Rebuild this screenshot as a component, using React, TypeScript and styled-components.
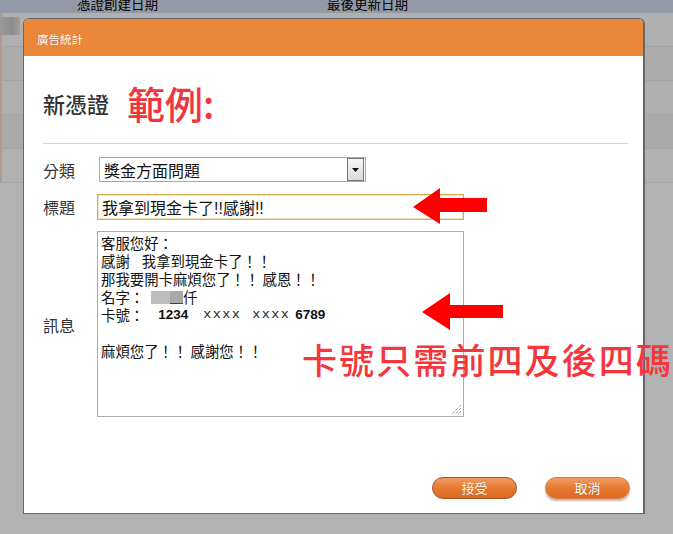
import * as React from "react";
import styled, { createGlobalStyle } from "styled-components";

const GlobalStyle = createGlobalStyle`
  html, body {
    margin: 0;
    padding: 0;
    background: #b2b2b2;
    font-family: "Noto Sans CJK TC", "Liberation Sans", sans-serif;
  }
`;

const CJK = `"Liberation Sans", "Noto Sans CJK TC", sans-serif`;

// background table rows behind the modal
const rows = ["#b0b0b0", "#acacac", "#afafaf", "#aaaaaa", "#b1b1b1"];

const App = () => {
  return (
    <>
      <GlobalStyle />
      <Page>
        <TableHead>
          <HeadCell>憑證創建日期</HeadCell>
          <HeadCell>最後更新日期</HeadCell>
        </TableHead>
        <Rows>
          {rows.map((bg, i) => (
            <Row key={i} $bg={bg}>
              {i === 0 && <RowThumb />}
            </Row>
          ))}
        </Rows>

        <Dialog>
          <DialogHeader>廣告統計</DialogHeader>
          <DialogBody>
            <TitleRow>
              <Heading>新憑證</Heading>
              <Example>範例:</Example>
            </TitleRow>
            <Divider />

            <Form>
              <Label>分類</Label>
              <SelectBox>
                <span>獎金方面問題</span>
                <SelectButton>
                  <svg width="7" height="4" viewBox="0 0 7 4">
                    <polygon points="0,0 7,0 3.5,4" fill="#111" />
                  </svg>
                </SelectButton>
              </SelectBox>

              <Label>標題</Label>
              <TextInput readOnly value="我拿到現金卡了!!感謝!!" />

              <Label>訊息</Label>
              <MessageBox>
                <Line>客服您好：</Line>
                <Line>
                  感謝<Gap $w={12} />我拿到現金卡了！！
                </Line>
                <Line>那我要開卡麻煩您了！！ 感恩！！</Line>
                <Line>
                  名字：<Blur />
                  <BlurDark />仟
                </Line>
                <Line>
                  卡號：<Digits $ml={14}>1234</Digits>
                  <Masked $ml={15}>xxxx</Masked>
                  <Masked $ml={11}>xxxx</Masked>
                  <Digits $ml={5}>6789</Digits>
                </Line>
                <Line>&nbsp;</Line>
                <Line>麻煩您了！！ 感謝您！！</Line>
                <Grip width="10" height="10" viewBox="0 0 10 10">
                  <path
                    d="M9 3 L3 9 M9 6 L6 9 M9 0 L0 9"
                    stroke="#777"
                    strokeWidth="1"
                    strokeDasharray="1 1"
                  />
                </Grip>
              </MessageBox>
            </Form>

            <Actions>
              <PillButton>接受</PillButton>
              <PillButton $soft>取消</PillButton>
            </Actions>
          </DialogBody>
        </Dialog>

        <Arrow $x={413} $y={188} width="75" height="37" viewBox="0 0 75 37">
          <polygon points="0,19 27,0 27,10 74,10 74,24 27,24 27,36" fill="#ff0000" />
        </Arrow>
        <Arrow $x={422} $y={293} width="82" height="38" viewBox="0 0 82 38">
          <polygon points="0,19 28,0 28,12 81,12 81,25 28,25 28,37" fill="#ff0000" />
        </Arrow>
        <Note>卡號只需前四及後四碼</Note>
      </Page>
    </>
  );
};

export default App;

const Page = styled.div`
  position: relative;
  width: 673px;
  height: 534px;
  overflow: hidden;
  background: #b2b2b2;
`;

const TableHead = styled.div`
  display: grid;
  grid-template-columns: 250px 250px;
  padding-left: 77px;
  height: 13px;
  overflow: hidden;
  background: #9399a7;
`;

const HeadCell = styled.div`
  font-size: 13.5px;
  line-height: 13px;
  margin-top: -3px;
  color: #000;
`;

const Rows = styled.div`
  display: flex;
  flex-direction: column;
`;

const Row = styled.div<{ $bg: string }>`
  height: 29px;
  background: ${(p) => p.$bg};
  border-bottom: 1px solid #a3a3a3;
  box-shadow: inset 2px 0 0 #b49a8c;
  padding-top: 4px;
  box-sizing: content-box;
`;

const RowThumb = styled.div`
  width: 20px;
  height: 18px;
  background: linear-gradient(90deg, #9a9a9a, #8c8c8c 60%, #a0a0a0);
`;

const Dialog = styled.div`
  position: absolute;
  left: 23px;
  top: 18px;
  width: 622px;
  height: 496px;
  box-sizing: border-box;
  display: flex;
  flex-direction: column;
  background: #fff;
  border: 1px solid #676767;
  border-right-width: 2px;
  border-radius: 6px 6px 0 0;
  overflow: hidden;
`;

const DialogHeader = styled.div`
  height: 37px;
  flex: none;
  box-sizing: border-box;
  padding: 2px 0 0 13px;
  display: flex;
  align-items: center;
  background: #eb8739;
  color: #fff;
  font-size: 11.5px;
  text-shadow: 0 0 1px rgba(120, 50, 0, 0.4);
`;

const DialogBody = styled.div`
  flex: 1;
  display: flex;
  flex-direction: column;
  padding: 0 15px 14px 19px;
`;

const TitleRow = styled.div`
  display: flex;
  align-items: center;
  height: 42px;
  margin-top: 26px;
`;

const Heading = styled.div`
  font-size: 22px;
  color: #333;
  font-weight: 500;
`;

const Example = styled.div`
  margin-left: 18px;
  font-size: 38px;
  line-height: 42px;
  font-weight: 500;
  color: #f0353e;
`;

const Divider = styled.div`
  height: 1px;
  margin-top: 19px;
  background: #d4d4d4;
`;

const Form = styled.div`
  display: grid;
  grid-template-columns: 54px auto;
  align-items: center;
  row-gap: 12px;
  margin-top: 13px;
`;

const Label = styled.div`
  font-size: 16px;
  color: #333;
`;

const SelectBox = styled.div`
  width: 267px;
  height: 25px;
  margin-left: 2px;
  box-sizing: border-box;
  display: flex;
  align-items: center;
  justify-content: space-between;
  padding: 0 1px 0 4px;
  border: 1px solid #a9a9a9;
  font-size: 16px;
  color: #111;
`;

const SelectButton = styled.div`
  width: 17px;
  height: 23px;
  box-sizing: border-box;
  display: flex;
  align-items: center;
  justify-content: center;
  border: 1px solid #777;
  background: linear-gradient(#f7f7f7, #dadada);
`;

const TextInput = styled.input`
  width: 367px;
  height: 26px;
  box-sizing: border-box;
  padding: 0 4px;
  border: 1px solid #d9a855;
  box-shadow: inset 0 0 0 1px #f5e2bd;
  outline: none;
  font-family: ${CJK};
  font-size: 16px;
  color: #111;
`;

const MessageBox = styled.div`
  position: relative;
  width: 367px;
  height: 186px;
  box-sizing: border-box;
  padding: 2px 3px;
  border: 1px solid #ababab;
  font-size: 14.4px;
  line-height: 18px;
  color: #111;
  grid-column: 2;
  margin-top: -1px;
`;

const Line = styled.div`
  display: flex;
  align-items: center;
  height: 18px;
  white-space: pre;
`;

const Gap = styled.span<{ $w: number }>`
  display: inline-block;
  width: ${(p) => p.$w}px;
`;

const Blur = styled.span`
  display: inline-block;
  width: 19px;
  height: 13px;
  margin-left: 7px;
  background: #bdbdbd;
`;

const BlurDark = styled.span`
  display: inline-block;
  width: 13px;
  height: 12px;
  background: #a9a9a9;
  border-bottom: 1px solid #444;
`;

const Digits = styled.span<{ $ml: number }>`
  margin-left: ${(p) => p.$ml}px;
  font-family: "Liberation Sans", Arial, sans-serif;
  font-weight: 700;
  font-size: 13.5px;
  color: #111;
`;

const Masked = styled.span<{ $ml: number }>`
  margin-left: ${(p) => p.$ml}px;
  font-family: "Liberation Mono", monospace;
  font-size: 13.5px;
  letter-spacing: 1.4px;
  color: #222;
`;

const Grip = styled.svg`
  position: absolute;
  right: 1px;
  bottom: 1px;
`;

const Actions = styled.div`
  margin-top: auto;
  margin-right: -2px;
  display: flex;
  justify-content: flex-end;
  gap: 28px;
`;

const PillButton = styled.button<{ $soft?: boolean }>`
  width: 85px;
  height: 22px;
  padding: 0;
  border-radius: 11px;
  border: 1px solid ${(p) => (p.$soft ? "#e27b3d" : "#a5531f")};
  background: linear-gradient(#f29c62, #e5782f 55%, #de6a24);
  box-shadow: ${(p) => (p.$soft ? "0 2px 2px rgba(0,0,0,0.28)" : "none")};
  color: #fff;
  font-family: "Noto Sans CJK TC", sans-serif;
  font-size: 13px;
  line-height: 20px;
  text-shadow: 0 0 1px rgba(100, 40, 0, 0.5);
`;

const Arrow = styled.svg<{ $x: number; $y: number }>`
  position: absolute;
  left: ${(p) => p.$x}px;
  top: ${(p) => p.$y}px;
`;

const Note = styled.div`
  position: absolute;
  left: 302px;
  top: 338px;
  font-size: 35px;
  line-height: 42px;
  letter-spacing: 2.1px;
  font-weight: 500;
  color: #f5363d;
  white-space: nowrap;
`;
